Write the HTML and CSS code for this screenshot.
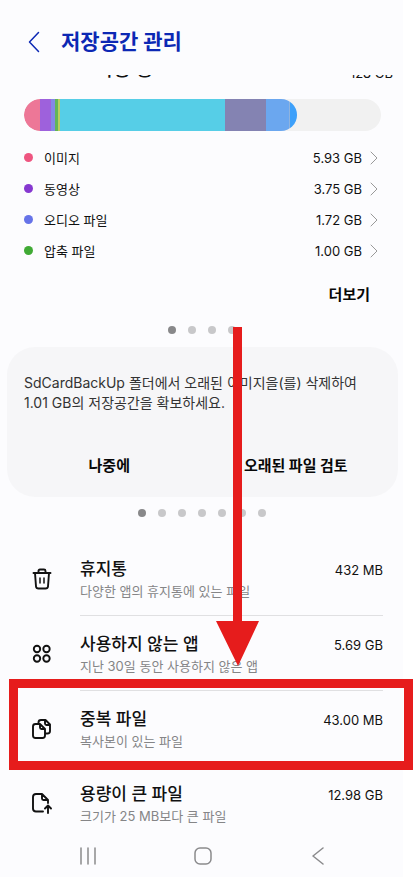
FILE: index.html
```html
<!DOCTYPE html>
<html lang="ko">
<head>
<meta charset="utf-8">
<meta name="viewport" content="width=device-width, initial-scale=1">
<title>저장공간 관리</title>
<link rel="stylesheet" href="styles.css">
</head>
<body>
<div class="screen">
  <header class="top">
    <button class="back" aria-label="뒤로"><svg width="12" height="22" viewBox="0 0 12 22"><path d="M10.500 1.500 1.500 11l9 9.500"/></svg></button>
    <h1>저장공간 관리</h1>
  </header>

  <main>
    <section class="usage">
      <div class="total"><span class="used">사용 중</span><span class="capacity">128 GB</span></div>
      <div class="bar">
        <div class="filled">
          <i class="seg pink"></i><i class="seg purple"></i><i class="seg violet"></i><i class="seg green"></i><i class="seg yellow"></i><i class="seg cyan"></i><i class="seg slate"></i><i class="seg sky"></i><i class="seg line"></i><i class="seg blue"></i>
        </div>
      </div>
      <ul class="types">
        <li><a href="#"><i class="mark image"></i><span class="name">이미지</span><span>5.93 GB</span><svg class="chevron" width="8" height="14" viewBox="0 0 8 14"><path d="m1 1 6 6-6 6"/></svg></a></li>
        <li><a href="#"><i class="mark video"></i><span class="name">동영상</span><span>3.75 GB</span><svg class="chevron" width="8" height="14" viewBox="0 0 8 14"><path d="m1 1 6 6-6 6"/></svg></a></li>
        <li><a href="#"><i class="mark audio"></i><span class="name">오디오 파일</span><span>1.72 GB</span><svg class="chevron" width="8" height="14" viewBox="0 0 8 14"><path d="m1 1 6 6-6 6"/></svg></a></li>
        <li><a href="#"><i class="mark archive"></i><span class="name">압축 파일</span><span>1.00 GB</span><svg class="chevron" width="8" height="14" viewBox="0 0 8 14"><path d="m1 1 6 6-6 6"/></svg></a></li>
      </ul>
      <button class="action more">더보기</button>
    </section>
    <div class="dots"><i class="on"></i><i></i><i></i><i></i></div>

    <section class="card">
      <p>SdCardBackUp 폴더에서 오래된 이미지을(를) 삭제하여 1.01 GB의 저장공간을 확보하세요.</p>
      <div class="choices"><button class="action">나중에</button><button class="action">오래된 파일 검토</button></div>
    </section>
    <div class="dots"><i class="on"></i><i></i><i></i><i></i><i></i><i></i><i></i></div>

    <ul class="menu">
      <li>
        <a href="#">
          <svg class="icon" width="20" height="22" viewBox="0 0 20 22"><path d="M1.500 5h17M6.500 5V3q0-1.500 1.500-1.500h4q1.500 0 1.500 1.500v2M3 5l1 13.500Q4.200 20.500 6.500 20.500h7q2.300 0 2.500-2L17 5"/><path class="thin" d="M8 10v5M12 10v5"/></svg>
          <span class="text"><span class="title">휴지통</span><span class="note">다양한 앱의 휴지통에 있는 파일</span></span>
          <span class="size">432 MB</span>
        </a>
      </li>
      <li>
        <a href="#">
          <svg class="icon" width="20" height="22" viewBox="0 0 20 22"><circle cx="5" cy="6" r="3.200"/><circle cx="14.500" cy="6" r="3.200"/><circle cx="5" cy="15.500" r="3.200"/><circle cx="14.500" cy="15.500" r="3.200"/></svg>
          <span class="text"><span class="title">사용하지 않는 앱</span><span class="note">지난 30일 동안 사용하지 않은 앱</span></span>
          <span class="size">5.69 GB</span>
        </a>
      </li>
      <li>
        <a href="#">
          <svg class="icon" width="20" height="22" viewBox="0 0 20 22"><path d="M3.500 6H8l5 5v6.500q0 2.500-2.500 2.500h-7Q1 20 1 17.500v-9Q1 6 3.500 6ZM8 6v3.500Q8 11 9.500 11H13M6.500 6V4.500Q6.500 2 9 2h4.500L18 6.500v6.500q0 2.500-2.500 2.500H13M13 2v3.500Q13 7 14.500 7H18"/></svg>
          <span class="text"><span class="title">중복 파일</span><span class="note">복사본이 있는 파일</span></span>
          <span class="size">43.00 MB</span>
        </a>
      </li>
      <li>
        <a href="#">
          <svg class="icon" width="20" height="22" viewBox="0 0 20 22"><path d="M11 18.500H4Q1 18.500 1 15.500V4q0-3 3-3h6l6 6v3M10 1v4.500Q10 7 11.500 7H16M16 20v-7M13 15.500l3-3 3 3"/></svg>
          <span class="text"><span class="title">용량이 큰 파일</span><span class="note">크기가 25 MB보다 큰 파일</span></span>
          <span class="size">12.98 GB</span>
        </a>
      </li>
    </ul>
  </main>

  <nav class="system">
    <button aria-label="최근 앱"><svg width="18" height="18" viewBox="0 0 18 18"><path d="M2 1v16M9 1v16M16 1v16"/></svg></button>
    <button aria-label="홈"><svg width="18" height="18" viewBox="0 0 18 18"><rect x="1" y="1" width="16" height="16" rx="5"/></svg></button>
    <button aria-label="뒤로"><svg width="18" height="18" viewBox="0 0 18 18"><path d="M14 1 4 9l10 8"/></svg></button>
  </nav>

  <svg class="arrow" width="43" height="339" viewBox="0 0 43 339"><path d="M17 0h9v294h17L22 339 0 294h17Z"/></svg>
  <div class="frame"></div>
</div>
</body>
</html>
```
FILE: styles.css
```css
* { box-sizing: border-box; }

body {
  margin: 0;
  padding-right: 11px;
  background: #fff;
  color: #111;
  font-family: Inter, "Noto Sans CJK KR", sans-serif;
  font-size: 13px;
}

h1, p, ul { margin: 0; padding: 0; }
li { list-style: none; }
a { color: inherit; text-decoration: none; }
i { display: block; }
svg { display: block; flex: none; fill: none; stroke-linecap: round; stroke-linejoin: round; }

button {
  padding: 0;
  border: 0;
  background: none;
  color: inherit;
  font: inherit;
}

.screen { position: relative; background: #fcfcfe; }

.top {
  display: flex;
  align-items: center;
  gap: 21px;
  height: 75px;
  padding: 8px 28px 0;
  color: #0c28b4;
}
.back svg { stroke: currentColor; stroke-width: 1.5; }
h1 { font-size: 21px; line-height: 30px; font-weight: 700; }

.usage { padding: 0 22px 0 24px; }
/* Scrolled under the header: only the foot of this line shows. */
.total {
  display: flex;
  justify-content: space-between;
  align-items: flex-end;
  height: 8px;
  margin: 0 -12px 16px 72px;
  overflow: hidden;
}
.used { font-size: 19px; line-height: 26px; font-weight: 500; }
.capacity { font-size: 13px; line-height: 20px; }

.bar { height: 32px; padding-right: 84px; border-radius: 16px; background: #f1f1f1; overflow: hidden; }
.filled { display: flex; height: 100%; border-radius: 16px; overflow: hidden; }
.seg { flex: 1 1 0; }
.pink { flex-grow: 16; background: #ed7797; }
.purple { flex-grow: 11; background: #9e61dc; }
.violet { flex-grow: 4; background: #8489e4; }
.green { flex-grow: 3; background: #62b557; }
.yellow { flex-grow: 2; background: #b9cf5e; }
.cyan { flex-grow: 165; background: #56cee7; }
.slate { flex-grow: 41; background: #8483b2; }
.sky { flex-grow: 23; background: #6ba7ef; }
.line { flex-grow: 1; background: #8fb3dd; }
.blue { flex-grow: 7; background: #3da0fa; }

.types { padding-top: 11px; }
.types a { display: flex; align-items: center; height: 31px; padding-right: 3px; }
.mark { width: 9px; height: 9px; margin-right: 11px; border-radius: 50%; }
.image { background: #ee5580; }
.video { background: #8638d0; }
.audio { background: #6673e8; }
.archive { background: #40aa35; }
.name { flex: 1; }
.chevron { margin-left: 8px; stroke: #999; }

.action { font-size: 15px; line-height: 22px; font-weight: 700; color: #080808; }
.more { display: block; margin: 18px 11px 0 auto; }

.dots { display: flex; justify-content: center; gap: 12px; padding-top: 20px; }
.dots i { width: 8px; height: 8px; border-radius: 50%; background: #c8c8ca; }
.dots .on { background: #88888a; }

.card {
  margin: 13px 5px 0 7px;
  padding: 26px 17px 20px;
  border-radius: 28px;
  background: #f6f6f8;
}
.card p { font-size: 14px; line-height: 20px; color: #333; }
.choices { display: grid; grid-template-columns: 1fr 1fr; gap: 16px; padding-top: 42px; }
.card + .dots { padding-top: 12px; }

.menu { padding: 24px 20px 0 32px; }
.menu a { position: relative; display: flex; height: 75px; }
.icon { margin: 27px 28px 0 0; stroke: #111; stroke-width: 1.9; }
.thin { stroke-width: 1.5; }
.text { flex: 1; padding-top: 16px; }
.title, .note { display: block; }
.title { font-size: 17px; line-height: 24px; font-weight: 500; }
.note { font-size: 13px; line-height: 20px; color: #858587; }
.size { padding-top: 19px; line-height: 20px; }
.menu li:not(:last-child) a::after {
  content: "";
  position: absolute;
  right: 0;
  bottom: 0;
  left: 48px;
  height: 1px;
  background: #e0e0e2;
}

.system {
  display: flex;
  justify-content: space-between;
  padding: 6px 76px 13px 79px;
}
.system svg { stroke: #8a8a8c; stroke-width: 1.5; }

.arrow { position: absolute; top: 327px; left: 216px; fill: #e61c1c; }
.frame {
  position: absolute;
  top: 679px;
  right: -10px;
  left: 9px;
  height: 91px;
  border: 9px solid #e61c1c;
}
```
